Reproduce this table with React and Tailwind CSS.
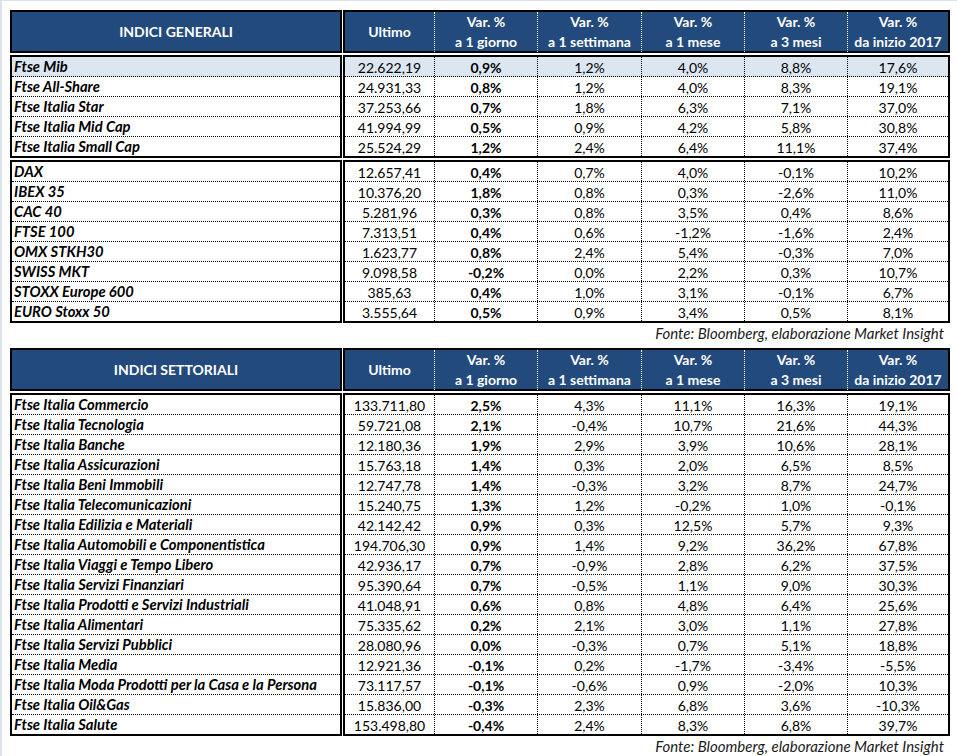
const generali1 = [
  ["Ftse Mib", "22.622,19", "0,9%", "1,2%", "4,0%", "8,8%", "17,6%"],
  ["Ftse All-Share", "24.931,33", "0,8%", "1,2%", "4,0%", "8,3%", "19,1%"],
  ["Ftse Italia Star", "37.253,66", "0,7%", "1,8%", "6,3%", "7,1%", "37,0%"],
  ["Ftse Italia Mid Cap", "41.994,99", "0,5%", "0,9%", "4,2%", "5,8%", "30,8%"],
  ["Ftse Italia Small Cap", "25.524,29", "1,2%", "2,4%", "6,4%", "11,1%", "37,4%"],
];

const generali2 = [
  ["DAX", "12.657,41", "0,4%", "0,7%", "4,0%", "-0,1%", "10,2%"],
  ["IBEX 35", "10.376,20", "1,8%", "0,8%", "0,3%", "-2,6%", "11,0%"],
  ["CAC 40", "5.281,96", "0,3%", "0,8%", "3,5%", "0,4%", "8,6%"],
  ["FTSE 100", "7.313,51", "0,4%", "0,6%", "-1,2%", "-1,6%", "2,4%"],
  ["OMX STKH30", "1.623,77", "0,8%", "2,4%", "5,4%", "-0,3%", "7,0%"],
  ["SWISS MKT", "9.098,58", "-0,2%", "0,0%", "2,2%", "0,3%", "10,7%"],
  ["STOXX Europe 600", "385,63", "0,4%", "1,0%", "3,1%", "-0,1%", "6,7%"],
  ["EURO Stoxx 50", "3.555,64", "0,5%", "0,9%", "3,4%", "0,5%", "8,1%"],
];

const settoriali = [
  ["Ftse Italia Commercio", "133.711,80", "2,5%", "4,3%", "11,1%", "16,3%", "19,1%"],
  ["Ftse Italia Tecnologia", "59.721,08", "2,1%", "-0,4%", "10,7%", "21,6%", "44,3%"],
  ["Ftse Italia Banche", "12.180,36", "1,9%", "2,9%", "3,9%", "10,6%", "28,1%"],
  ["Ftse Italia Assicurazioni", "15.763,18", "1,4%", "0,3%", "2,0%", "6,5%", "8,5%"],
  ["Ftse Italia Beni Immobili", "12.747,78", "1,4%", "-0,3%", "3,2%", "8,7%", "24,7%"],
  ["Ftse Italia Telecomunicazioni", "15.240,75", "1,3%", "1,2%", "-0,2%", "1,0%", "-0,1%"],
  ["Ftse Italia Edilizia e Materiali", "42.142,42", "0,9%", "0,3%", "12,5%", "5,7%", "9,3%"],
  ["Ftse Italia Automobili e Componentistica", "194.706,30", "0,9%", "1,4%", "9,2%", "36,2%", "67,8%"],
  ["Ftse Italia Viaggi e Tempo Libero", "42.936,17", "0,7%", "-0,9%", "2,8%", "6,2%", "37,5%"],
  ["Ftse Italia Servizi Finanziari", "95.390,64", "0,7%", "-0,5%", "1,1%", "9,0%", "30,3%"],
  ["Ftse Italia Prodotti e Servizi Industriali", "41.048,91", "0,6%", "0,8%", "4,8%", "6,4%", "25,6%"],
  ["Ftse Italia Alimentari", "75.335,62", "0,2%", "2,1%", "3,0%", "1,1%", "27,8%"],
  ["Ftse Italia Servizi Pubblici", "28.080,96", "0,0%", "-0,3%", "0,7%", "5,1%", "18,8%"],
  ["Ftse Italia Media", "12.921,36", "-0,1%", "0,2%", "-1,7%", "-3,4%", "-5,5%"],
  ["Ftse Italia Moda Prodotti per la Casa e la Persona", "73.117,57", "-0,1%", "-0,6%", "0,9%", "-2,0%", "10,3%"],
  ["Ftse Italia Oil&Gas", "15.836,00", "-0,3%", "2,3%", "6,8%", "3,6%", "-10,3%"],
  ["Ftse Italia Salute", "153.498,80", "-0,4%", "2,4%", "8,3%", "6,8%", "39,7%"],
];

const cols = "grid grid-cols-[89px_103px_104px_103px_103px_101px]";

const Header = ({ title }) => (
  <div className="flex gap-[1px] text-white font-bold">
    <div className="w-[332px] h-[43px] border-2 border-black bg-[#234a7d] flex items-center justify-center">
      {title}
    </div>
    <div className={`w-[607px] h-[43px] border-2 border-black bg-[#234a7d] ${cols} leading-[20px]`}>
      <div className="flex items-center justify-center">Ultimo</div>
      {["a 1 giorno", "a 1 settimana", "a 1 mese", "a 3 mesi", "da inizio 2017"].map((t) => (
        <div key={t} className="flex flex-col items-center justify-center border-l border-dotted border-white">
          <span>Var. %</span>
          <span>{t}</span>
        </div>
      ))}
    </div>
  </div>
);

const Block = ({ rows, highlightFirst }) => (
  <div className="flex gap-[1px]">
    <div className="w-[332px] border-2 border-black">
      {rows.map((r, i) => (
        <div
          key={r[0]}
          className={`h-[20px] pl-[2px] flex items-center font-bold italic text-[14.75px] border-b border-dotted border-black last:h-[19px] last:border-b-0 ${highlightFirst && i === 0 ? "bg-[#dce6f1]" : ""}`}
        >
          {r[0]}
        </div>
      ))}
    </div>
    <div className="w-[607px] border-2 border-black">
      {rows.map((r, i) => (
        <div
          key={r[0]}
          className={`${cols} h-[20px] border-b border-dotted border-black last:h-[19px] last:border-b-0 ${highlightFirst && i === 0 ? "bg-[#dce6f1]" : ""}`}
        >
          {r.slice(1).map((v, j) => (
            <div
              key={j}
              className={`flex items-center justify-center ${j > 0 ? "border-l border-dotted border-black" : ""} ${j === 1 ? "font-bold" : ""}`}
            >
              {v}
            </div>
          ))}
        </div>
      ))}
    </div>
  </div>
);

const Fonte = ({ h }) => (
  <div className={`w-[939px] ${h} pr-[5px] text-right italic text-[15px] text-[#1a1a1a] leading-[18px] pt-[1px]`}>
    Fonte: Bloomberg, elaborazione Market Insight
  </div>
);

export default function App() {
  return (
    <div
      className="w-[957px] h-[756px] bg-white border-t border-l-2 border-[#dce3ee] pl-[8px] pt-[9px] text-black text-[14px] overflow-hidden"
      style={{ fontFamily: "Lato, 'Open Sans', sans-serif" }}
    >
      <div className="flex flex-col gap-[2px]">
        <Header title="INDICI GENERALI" />
        <Block rows={generali1} highlightFirst />
        <Block rows={generali2} />
      </div>
      <Fonte h="h-[25px]" />
      <div className="flex flex-col gap-[2px]">
        <Header title="INDICI SETTORIALI" />
        <Block rows={settoriali} />
      </div>
      <Fonte h="h-[20px]" />
    </div>
  );
}
